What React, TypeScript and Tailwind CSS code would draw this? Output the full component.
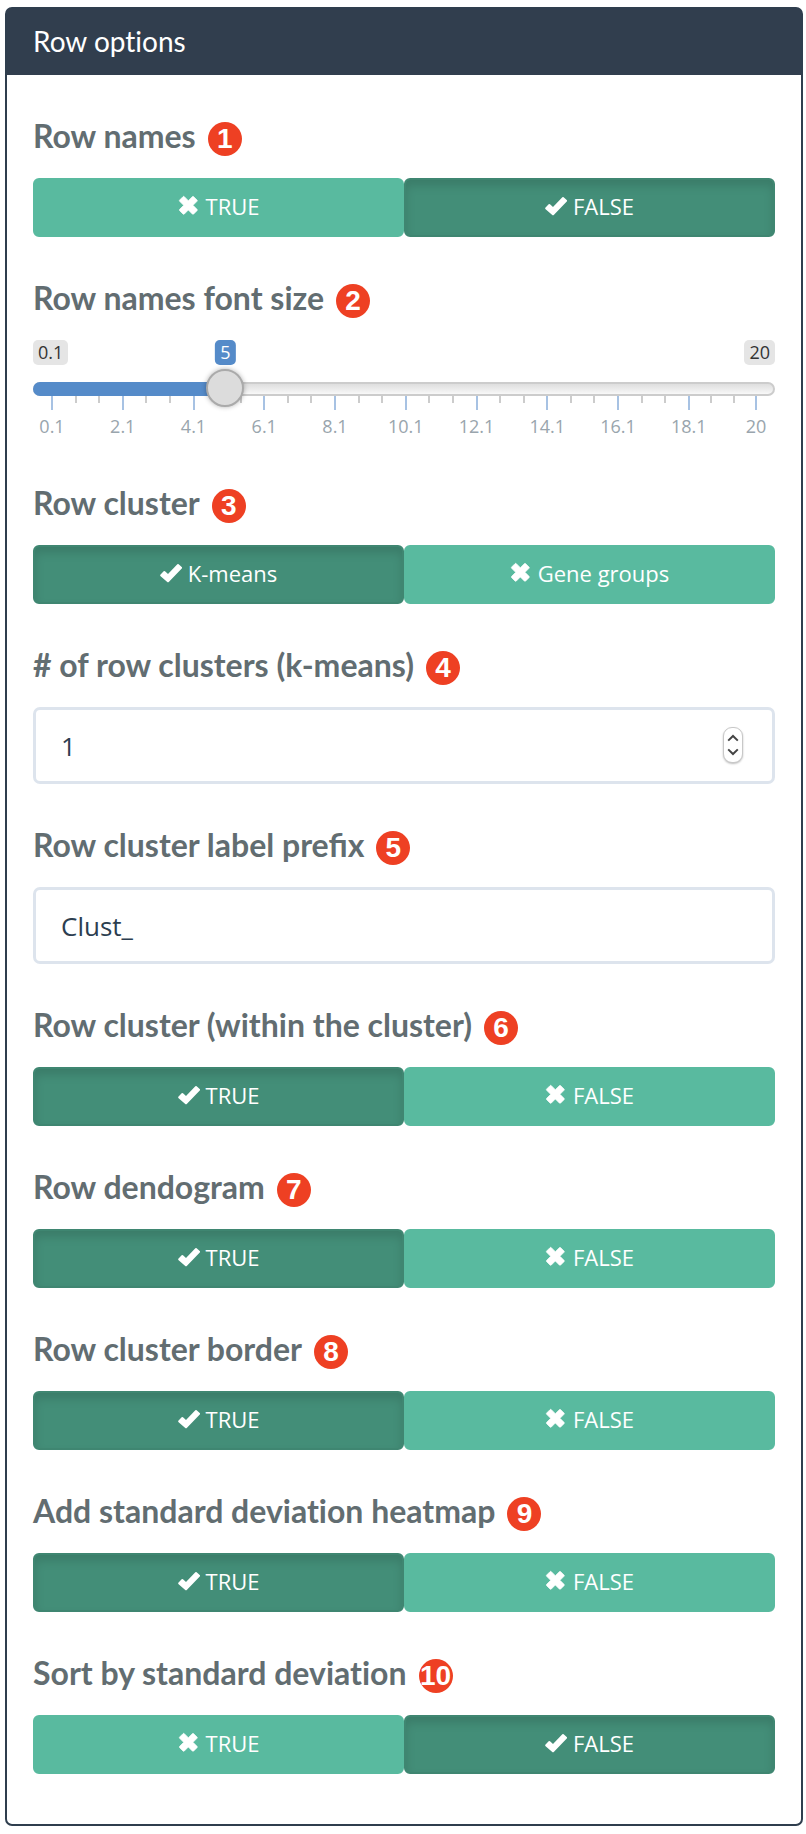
import { useState } from "react";
import type { ReactNode } from "react";

function Check() {
  return (
    <svg viewBox="0 0 66 66" className="size-[22px] shrink-0" fill="currentColor" aria-hidden="true">
      <path d="M1 38 L11 28 Q13 26 15 28 L24 36 L52 7 Q54 5 56 7 L66 16 Q67 18 66 19 L27 59 Q24 62 21 59 L1 42 Q0 40 1 38 Z" />
    </svg>
  );
}

function Cross() {
  return (
    <svg viewBox="0 0 66 66" className="size-[22px] shrink-0" fill="currentColor" aria-hidden="true">
      <path d="M15 5 Q17 3 19 5 L31 17 L43 5 Q45 3 47 5 L57 15 Q59 17 57 19 L45 31 L57 43 Q59 45 57 47 L47 57 Q45 59 43 57 L31 45 L19 57 Q17 59 15 57 L5 47 Q3 45 5 43 L17 31 L5 19 Q3 17 5 15 Z" stroke="currentColor" strokeWidth="2" />
    </svg>
  );
}

function Section({ n, title, htmlFor, children }: { n: number; title: string; htmlFor: string; children: ReactNode }) {
  return (
    <section className="flex flex-col gap-[22px]">
      <div className="flex h-10 items-end gap-3">
        <label
          id={htmlFor + "-label"}
          htmlFor={htmlFor}
          className={
            "font-['Lato',sans-serif] text-[32px] leading-10 font-bold whitespace-nowrap text-[#626d71] " +
            (title.includes("ti") ? "[font-variant-ligatures:none]" : "")
          }
        >
          {title}
        </label>
        <span className="flex size-[34px] shrink-0 items-center justify-center rounded-full bg-[#ee4023] font-['Liberation_Sans',sans-serif] text-[28px] leading-none font-bold text-white">
          {n}
        </span>
      </div>
      {children}
    </section>
  );
}

function Toggle({ n, title, id, options, initial }: { n: number; title: string; id: string; options: string[]; initial: number }) {
  const [active, setActive] = useState(initial);
  return (
    <Section n={n} title={title} htmlFor={id}>
      <div role="group" aria-labelledby={id + "-label"} className="grid grid-cols-2">
        {options.map((option, i) => (
          <button
            key={option}
            id={i === 0 ? id : undefined}
            type="button"
            aria-pressed={i === active}
            onClick={() => setActive(i)}
            className={
              "flex h-[59px] items-center justify-center gap-[6px] rounded-md border-2 pb-[3px] text-[22px] leading-8 text-white " +
              (i === active
                ? "border-[#3f8671] bg-[#438e78] shadow-[inset_0_6px_10px_rgba(0,0,0,0.125)]"
                : "border-[#59ba9f] bg-[#59ba9f]")
            }
          >
            {i === active ? <Check /> : <Cross />}
            <span>{option}</span>
          </button>
        ))}
      </div>
    </Section>
  );
}

const MIN = 0.1;
const MAX = 20;
const MAJOR = [0.1, 2.1, 4.1, 6.1, 8.1, 10.1, 12.1, 14.1, 16.1, 18.1, 20];
const percent = (v: number) => ((v - MIN) / (MAX - MIN)) * 100 + "%";

function FontSizeSlider() {
  const [value, setValue] = useState(5);
  return (
    <Section n={2} title="Row names font size" htmlFor="font-size">
      <div className="flex h-[102px] flex-col text-[18px]">
        <div className="relative flex h-[25px] justify-between leading-[25px] text-[#333]">
          <span className="rounded-[5px] bg-[#e5e5e5] px-[5px]">0.1</span>
          <span className="rounded-[5px] bg-[#e5e5e5] px-[5px]">20</span>
          <div className="absolute inset-x-[19px] top-0">
            <output
              htmlFor="font-size"
              className="absolute -translate-x-1/2 rounded-[5px] bg-[#558bc9] px-[5px] text-white"
              style={{ left: percent(value) }}
            >
              {value}
            </output>
          </div>
        </div>
        <div className="relative mt-[17px] h-[14px] rounded-full border-2 border-[#ccc] bg-linear-to-b from-[#dedede] to-[#f8f8f8]">
          <div className="absolute -inset-y-[2px] right-[17px] -left-[2px]">
            <div className="h-full rounded-l-full bg-[#558bc9]" style={{ width: percent(value) }} />
          </div>
          <input
            id="font-size"
            type="range"
            min={MIN}
            max={MAX}
            step={0.1}
            value={value}
            onChange={(e) => setValue(Number(e.target.value))}
            className="absolute -inset-x-[2px] -top-[15px] z-10 h-[38px] w-[calc(100%+4px)] cursor-pointer appearance-none bg-transparent [&::-webkit-slider-thumb]:size-[38px] [&::-webkit-slider-thumb]:appearance-none [&::-webkit-slider-thumb]:rounded-full [&::-webkit-slider-thumb]:border-2 [&::-webkit-slider-thumb]:border-[#aaa] [&::-webkit-slider-thumb]:bg-[#dcdcdc] [&::-webkit-slider-thumb]:shadow-[0_0_5px_rgba(0,0,0,0.3)]"
          />
        </div>
        <div className="relative mx-[19px] text-[#99a5ad]">
          {MAJOR.map((v, i) => {
            const next = MAJOR[i + 1];
            return (
              <div key={v}>
                <div className="absolute top-0 h-[14px] w-[2px] -translate-x-1/2 bg-[#a7c2e3]" style={{ left: percent(v) }} />
                <span className="absolute top-[18px] -translate-x-1/2 leading-[25px]" style={{ left: percent(v) }}>
                  {v}
                </span>
                {next !== undefined &&
                  [1, 2].map((k) => (
                    <div key={k} className="absolute top-0 h-[7px] w-[2px] -translate-x-1/2 bg-[#ccc]" style={{ left: percent(v + ((next - v) * k) / 3) }} />
                  ))}
              </div>
            );
          })}
        </div>
      </div>
    </Section>
  );
}

const fieldClass =
  "h-[77px] w-full rounded-[7px] border-[3px] border-[#dde4ed] bg-white px-[25px] text-[26px] text-[#2c3e50] outline-none";

function ClusterCount() {
  const [count, setCount] = useState(1);
  return (
    <Section n={4} title="# of row clusters (k-means)" htmlFor="clusters">
      <div className="relative">
        <input
          id="clusters"
          type="number"
          min={1}
          value={count}
          onChange={(e) => setCount(Number(e.target.value))}
          className={fieldClass + " block [appearance:textfield] [&::-webkit-inner-spin-button]:appearance-none"}
        />
        <div className="absolute top-5 right-8 flex h-9 w-5 flex-col rounded-[9px] border border-[#c8c8c8] bg-white text-[#444] shadow-[0_1px_2px_rgba(0,0,0,0.25)]">
          <button type="button" aria-label="Increase" onClick={() => setCount(count + 1)} className="flex flex-1 items-center justify-center pt-[3px]">
            <svg viewBox="0 0 12 8" className="h-2 w-3" fill="none" stroke="currentColor" strokeWidth="2">
              <path d="M1.2 6.6 L6 2 L10.8 6.6" />
            </svg>
          </button>
          <button type="button" aria-label="Decrease" onClick={() => setCount(Math.max(1, count - 1))} className="flex flex-1 items-center justify-center pb-[3px]">
            <svg viewBox="0 0 12 8" className="h-2 w-3" fill="none" stroke="currentColor" strokeWidth="2">
              <path d="M1.2 1.4 L6 6 L10.8 1.4" />
            </svg>
          </button>
        </div>
      </div>
    </Section>
  );
}

const TF = ["TRUE", "FALSE"];

export default function App() {
  return (
    <main className="bg-white pt-[7px] pr-[3px] pb-2 pl-[5px] font-['Open_Sans',sans-serif]">
      <div className="rounded-[7px] border-2 border-[#2f3e4e] bg-white">
        <header className="bg-[#313e4e] px-[26px] pt-3 pb-[14px]">
          <h2 className="font-['Lato',sans-serif] text-[28px] leading-10 text-white [font-variant-ligatures:none]">Row options</h2>
        </header>
        <div className="flex flex-col gap-[41px] px-[26px] pt-[41px] pb-[50px]">
          <Toggle n={1} title="Row names" id="row-names" options={TF} initial={1} />
          <FontSizeSlider />
          <Toggle n={3} title="Row cluster" id="row-cluster" options={["K-means", "Gene groups"]} initial={0} />
          <ClusterCount />
          <Section n={5} title="Row cluster label prefix" htmlFor="prefix">
            <input id="prefix" type="text" defaultValue="Clust_" className={fieldClass} />
          </Section>
          <Toggle n={6} title="Row cluster (within the cluster)" id="within" options={TF} initial={0} />
          <Toggle n={7} title="Row dendogram" id="dendogram" options={TF} initial={0} />
          <Toggle n={8} title="Row cluster border" id="border" options={TF} initial={0} />
          <Toggle n={9} title="Add standard deviation heatmap" id="sd-heatmap" options={TF} initial={0} />
          <Toggle n={10} title="Sort by standard deviation" id="sd-sort" options={TF} initial={1} />
        </div>
      </div>
    </main>
  );
}
